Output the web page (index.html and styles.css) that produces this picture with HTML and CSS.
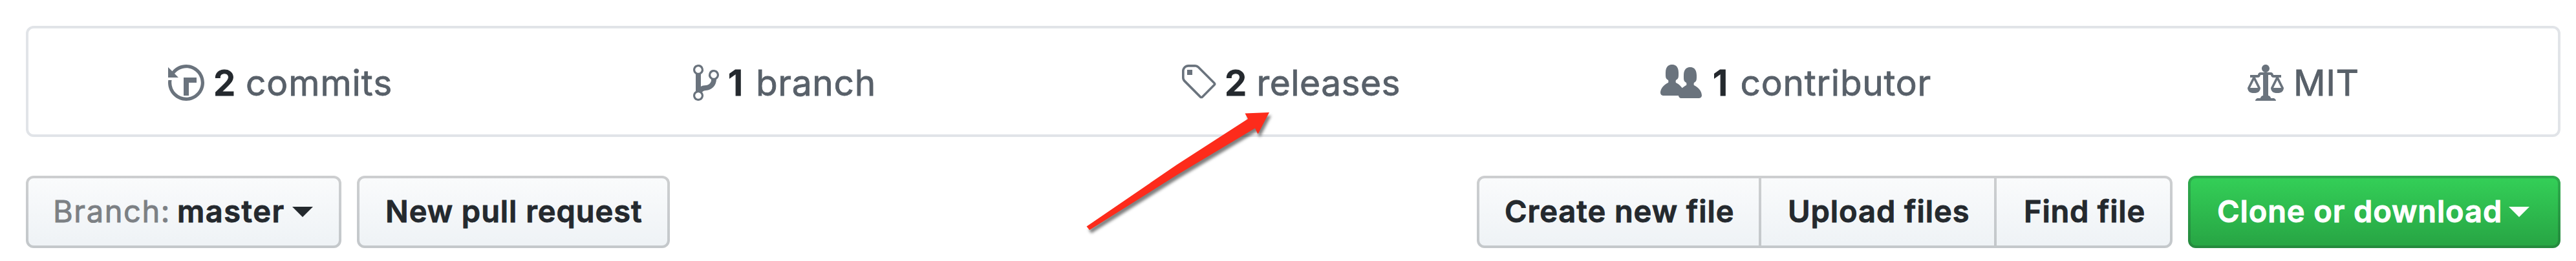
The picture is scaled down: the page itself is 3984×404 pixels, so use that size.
FILE: index.html
```html
<!DOCTYPE html>
<html lang="en">
<head>
<meta charset="utf-8">
<title>Repository overview</title>
<link rel="stylesheet" href="styles.css">
</head>
<body>
<main class="page">
  <ul class="summary">
    <li class="stat stat-commits">
      <svg class="icon" width="56" height="64" viewBox="0 0 14 16"><path d="M8 13H6V6h5v2H8v5zM7 1C4.81 1 2.87 2.02 1.59 3.59L0 2v4h4L2.5 4.5C3.55 3.17 5.17 2.3 7 2.3c3.14 0 5.7 2.56 5.7 5.7s-2.56 5.7-5.7 5.7A5.71 5.71 0 0 1 1.3 8c0-.34.03-.67.09-1H.08C.03 7.33 0 7.66 0 8c0 3.86 3.14 7 7 7s7-3.14 7-7-3.14-7-7-7z"/></svg>
      <b class="num">2</b><span class="label">commits</span>
    </li>
    <li class="stat stat-branch">
      <svg class="icon" width="40" height="64" viewBox="0 0 10 16"><path fill-rule="evenodd" d="M10 5c0-1.11-.89-2-2-2a1.993 1.993 0 0 0-1 3.72v.3c-.02.52-.23.98-.63 1.38-.4.4-.86.61-1.38.63-.83.02-1.48.16-2 .45V4.72a1.993 1.993 0 0 0-1-3.72C.88 1 0 1.89 0 3a2 2 0 0 0 1 1.72v6.56c-.59.35-1 .99-1 1.72 0 1.11.89 2 2 2 1.11 0 2-.89 2-2 0-.53-.2-1-.53-1.36.09-.06.48-.41.59-.47.25-.11.56-.17.94-.17 1.05-.05 1.95-.45 2.75-1.25S8.95 7.77 9 6.73h-.02C9.59 6.37 10 5.73 10 5zM2 1.8c.66 0 1.2.55 1.2 1.2 0 .65-.55 1.2-1.2 1.2C1.35 4.2.8 3.65.8 3c0-.65.55-1.2 1.2-1.2zm0 12.41c-.66 0-1.2-.55-1.2-1.2 0-.65.55-1.2 1.2-1.2.65 0 1.2.55 1.2 1.2 0 .65-.55 1.2-1.2 1.2zm6-8c-.66 0-1.2-.55-1.2-1.2 0-.65.55-1.2 1.2-1.2.65 0 1.2.55 1.2 1.2 0 .65-.55 1.2-1.2 1.2z"/></svg>
      <b class="num num-one">1</b><span class="label">branch</span>
    </li>
    <li class="stat stat-releases">
      <svg class="icon" width="56" height="64" viewBox="0 0 14 16"><path fill-rule="evenodd" d="M7.73 1.73C7.26 1.26 6.62 1 5.96 1H3.5C2.13 1 1 2.13 1 3.5v2.47c0 .66.27 1.3.73 1.77l6.06 6.06c.39.39 1.02.39 1.41 0l4.59-4.59a.996.996 0 0 0 0-1.41L7.73 1.73zM2.38 7.09c-.31-.3-.47-.7-.47-1.13V3.5c0-.88.72-1.59 1.59-1.59h2.47c.42 0 .83.16 1.13.47l6.14 6.13-4.73 4.73-6.13-6.15zM3.01 3h2v2H3V3h.01z"/></svg>
      <b class="num">2</b><span class="label">releases</span>
    </li>
    <li class="stat stat-contributors">
      <svg class="icon" width="64" height="64" viewBox="0 0 16 16"><path d="M16 12.999c0 .439-.45 1-1 1H7.995c-.539 0-.994-.447-.995-.999H1c-.54 0-1-.561-1-1 0-2.634 3-4 3-4s.229-.409 0-1c-.841-.621-1.058-.59-1-3 .058-2.419 1.367-3 2.5-3s2.442.58 2.5 3c.058 2.41-.159 2.379-1 3-.229.59 0 1 0 1s1.549.711 2.42 2.088C9.196 9.369 10 8.999 10 8.999s.229-.409 0-1c-.841-.62-1.058-.59-1-3 .058-2.419 1.367-3 2.5-3s2.437.581 2.495 3c.059 2.41-.158 2.38-1 3-.229.59 0 1 0 1s3.005 1.366 3.005 4"/></svg>
      <b class="num num-one">1</b><span class="label">contributor</span>
    </li>
    <li class="stat stat-license">
      <svg class="icon" width="56" height="64" viewBox="0 0 14 16"><path fill-rule="evenodd" d="M7 4c-.83 0-1.5-.67-1.5-1.5S6.17 1 7 1s1.5.67 1.5 1.5S7.83 4 7 4zm7 6c0 1.11-.89 2-2 2h-1c-1.11 0-2-.89-2-2l2-4h-1c-.55 0-1-.45-1-1H8v8c.42 0 1 .45 1 1h1c.42 0 1 .45 1 1H3c0-.55.58-1 1-1h1c0-.55.58-1 1-1h.03L6 5H5c0 .55-.45 1-1 1H3l2 4c0 1.11-.89 2-2 2H2c-1.11 0-2-.89-2-2l2-4H1V5h3c0-.55.45-1 1-1h4c.55 0 1 .45 1 1h3v1h-1l2 4zM2.5 7L1 10h3L2.5 7zM13 10l-1.5-3-1.5 3h3z"/></svg>
      <span class="label">MIT</span>
    </li>
  </ul>

  <div class="toolbar">
    <div class="group group-left">
      <button class="btn btn-branch"><span class="prefix">Branch:</span><span class="current">master</span><span class="caret"></span></button>
      <button class="btn btn-pull">New pull request</button>
    </div>
    <div class="group group-right">
      <div class="joined">
        <button class="btn btn-create">Create new file</button>
        <button class="btn btn-upload">Upload files</button>
        <button class="btn btn-find">Find file</button>
      </div>
      <button class="btn btn-primary"><span class="clone">Clone or download</span><span class="caret"></span></button>
    </div>
  </div>

  <svg class="pointer" width="310" height="210" viewBox="0 0 310 210"><path d="M10.500 190.500 150 95 260 24 255.500 15.500 293 14 275.500 47.500 271 38.500 150 111 15 196z"/></svg>
</main>
</body>
</html>
```

FILE: styles.css
```css
* { box-sizing: border-box; }

body {
  margin: 0;
  background: #fff;
  font-family: Inter, "Liberation Sans", sans-serif;
}

.page {
  position: relative;
  height: 404px;
  padding: 40px 24px 0 40px;
  overflow: hidden;
}

/* Repository counters */
.summary {
  display: grid;
  grid-template-columns: repeat(5, 1fr);
  height: 172px;
  margin: 0;
  padding: 4px 0 0;
  list-style: none;
  border: 4px solid #e1e4e8;
  border-radius: 12px;
}

.stat {
  display: flex;
  align-items: center;
  font-size: 55px;
  line-height: 64px;
  white-space: nowrap;
  color: #586069;
}

.icon { flex: none; fill: #6a737d; overflow: visible; }

.label { -webkit-text-stroke: 0.8px currentColor; }

.num {
  width: 34px;
  margin-left: 14px;
  font-weight: 600;
  color: #24292e;
  -webkit-text-stroke: 1px currentColor;
}
.num-one { width: 24px; }

.stat-commits { padding-left: 216px; }
.stat-commits .label { margin-left: 16px; letter-spacing: 0.95px; }
.stat-branch { padding-left: 245.6px; }
.stat-branch .label { margin-left: 19px; letter-spacing: 0.7px; }
.stat-releases { padding-left: 215.2px; }
.stat-releases .label { margin-left: 15.5px; letter-spacing: 0.47px; }
.stat-contributors { padding-left: 176.8px; }
.stat-contributors .num { margin-left: 17px; }
.stat-contributors .label { margin-left: 18.5px; letter-spacing: 0.77px; }
.stat-license { padding-left: 302.4px; }
.stat-license .label { margin-left: 15px; letter-spacing: 0.5px; }

/* File actions */
.toolbar {
  display: flex;
  justify-content: space-between;
  margin-top: 60px;
}

.group, .joined { display: flex; }
.group { gap: 24px; }

.btn {
  display: flex;
  align-items: center;
  flex: none;
  height: 112px;
  margin: 0;
  padding: 0 0 2px;
  border: 4px solid rgba(27, 31, 35, 0.2);
  border-radius: 12px;
  background: #eff3f6 linear-gradient(-180deg, #fafbfc 0%, #eff3f6 90%) repeat-x 0 -4px / 110% 110%;
  font: 600 47px/56px Inter, "Liberation Sans", sans-serif;
  letter-spacing: 0.95px;
  white-space: nowrap;
  color: #24292e;
  -webkit-text-stroke: 0.9px currentColor;
}

.btn-branch { width: 488px; padding-left: 38px; letter-spacing: 1.5px; }
.prefix { width: 192px; text-align: left; font-weight: 400; letter-spacing: 1.6px; color: #7c8084; }
.current { width: 178px; text-align: left; }
.btn-pull { width: 484px; padding-left: 40px; }

.btn-create { width: 440px; padding-left: 39px; border-radius: 12px 0 0 12px; }
.btn-upload { width: 364px; padding-left: 41px; border-left: 0; border-radius: 0; }
.btn-find { width: 272px; padding-left: 42px; border-left: 0; border-radius: 0 12px 12px 0; letter-spacing: 0.8px; }

.btn-primary {
  width: 576px;
  padding-left: 41px;
  color: #fff;
  background: #28a745 linear-gradient(-180deg, #34d058 0%, #28a745 90%) repeat-x 0 -4px / 110% 110%;
}
.clone { width: 451px; text-align: left; letter-spacing: 0.88px; }

.caret {
  width: 32px;
  height: 16px;
  margin-top: 2px;
  background: currentColor;
  clip-path: polygon(0 0, 100% 0, 50% 100%);
}

/* Annotation arrow */
.pointer {
  position: absolute;
  left: 1670px;
  top: 160px;
  fill: #fd2b1b;
  filter: drop-shadow(3px 5px 2px rgba(0, 0, 0, 0.5));
}
```
